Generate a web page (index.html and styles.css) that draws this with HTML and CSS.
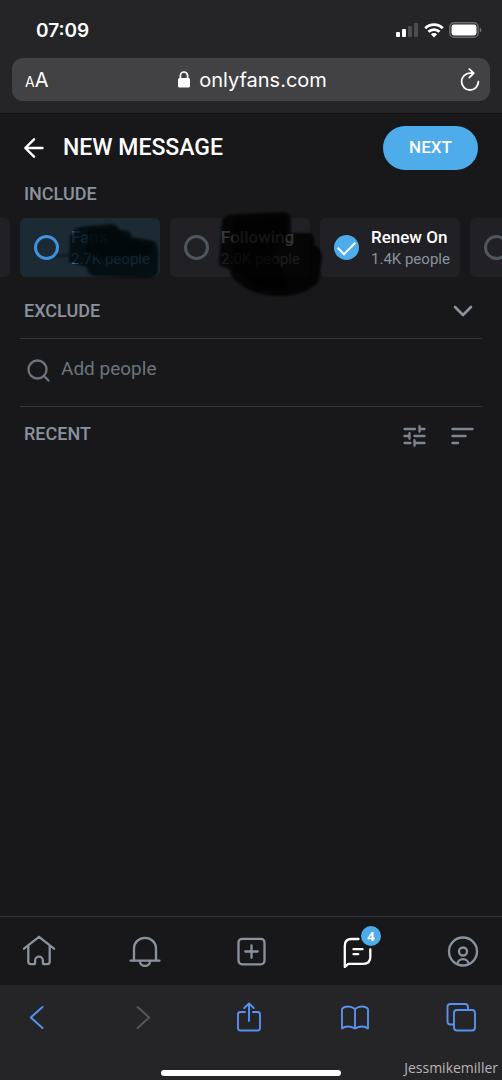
FILE: index.html
```html
<!DOCTYPE html>
<html lang="en">
<head>
<meta charset="utf-8">
<meta name="viewport" content="width=device-width, initial-scale=1">
<title>New message</title>
<link rel="stylesheet" href="styles.css">
</head>
<body>
<header class="browser-top">
  <div class="status">
    <time class="clock">07:09</time>
    <div class="status-icons">
      <svg width="23" height="15" viewBox="0 0 23 15" fill="#fff"><rect x="0" y="9" width="4" height="5" rx="1"/><rect x="6" y="6" width="4" height="8" rx="1"/><g fill="#4c4c4e"><rect x="12" y="3" width="4" height="11" rx="1"/><rect x="18" y="0" width="4" height="14" rx="1"/></g></svg>
      <svg width="20" height="15" viewBox="0 0 20 15" fill="none" stroke="#fff" stroke-width="2.800"><path d="M1.200 5.300a12.600 12.600 0 0 1 17.600 0M4.500 8.800a7.800 7.800 0 0 1 11 0"/><path d="M6.900 11.200a4.400 4.400 0 0 1 6.200 0L10 14.400z" fill="#fff" stroke="none"/></svg>
      <svg width="33" height="16" viewBox="0 0 33 16"><rect x=".8" y=".8" width="28.400" height="14.400" rx="4.200" fill="none" stroke="#6a6a6c" stroke-width="1.400"/><rect x="2.500" y="2.500" width="25" height="11" rx="2.400" fill="#fff"/><path d="M30.800 5.500c2 .8 2 4.200 0 5z" fill="#78787a"/></svg>
    </div>
  </div>
  <div class="address">
    <button class="text-size" aria-label="Text size"><small>A</small>A</button>
    <button class="site">
      <svg width="12" height="17" viewBox="0 0 12 17"><rect x="0" y="7" width="12" height="9.500" rx="1.600" fill="#fff"/><path d="M2.400 8V4.600a3.600 3.600 0 0 1 7.200 0V8" fill="none" stroke="#fff" stroke-width="1.700"/></svg>
      <span>onlyfans.com</span>
    </button>
    <button class="reload" aria-label="Reload"><svg width="20" height="24" viewBox="0 0 20 24" fill="none" stroke="#fff" stroke-width="1.800" stroke-linecap="round" stroke-linejoin="round"><path d="M13.500 5.200H10a8.400 8.400 0 1 0 8.400 8.400M9.400 1.200l4.300 4-4.300 4.300"/></svg></button>
  </div>
</header>

<main class="page">
  <div class="title-row">
    <a class="back" href="#" aria-label="Back"><svg width="20" height="20" viewBox="0 0 20 20" fill="none" stroke="#fff" stroke-width="2.400" stroke-linecap="round" stroke-linejoin="round"><path d="M18.500 10H1.500M10 1.300L1.300 10l8.700 8.700"/></svg></a>
    <h1>NEW MESSAGE</h1>
    <button class="next">NEXT</button>
  </div>

  <h2 class="label include">INCLUDE</h2>
  <div class="strip">
    <div class="chips">
      <div class="chip spare"></div>
      <label class="chip active"><input type="checkbox"><span class="chip-text"><b>Fans</b><span>2.7K people</span></span></label>
      <label class="chip"><input type="checkbox"><span class="chip-text"><b>Following</b><span>2.0K people</span></span></label>
      <label class="chip"><input type="checkbox" checked><span class="chip-text"><b>Renew On</b><span>1.4K people</span></span></label>
      <label class="chip"><input type="checkbox" aria-label="More people"></label>
    </div>
    <svg class="marker" width="340" height="100" viewBox="0 0 340 100" fill="#000">
      <g opacity=".8">
        <path d="M70 31Q72 21 88 20L112 18Q119 20 120 24Q131 23 132 31L154 35Q158 37 158 49V66Q156 73 144 72L94 70Q87 69 87 61L69 56Z" fill="#01080b"/>
        <path d="M56 50L72 49" stroke="#020a0e" stroke-width="1.500"/>
        <path d="M222 15Q224 8 240 8L284 6Q291 7 291 15V27H310Q315 29 314 39Q322 42 322 52L319 75Q310 87 285 90Q256 91 240 78Q229 71 230 64L219 59Z"/>
      </g>
      <path d="M88 24L114 22L130 34L152 38V48L98 52L86 46Z" fill="#01080b" opacity=".75"/>
      <path d="M232 13L286 11L287 32L274 50L284 66L290 84L262 84L234 66Z" opacity=".6"/>
    </svg>
  </div>

  <button class="exclude label">EXCLUDE
    <svg width="20" height="12" viewBox="0 0 20 12" fill="none" stroke="#8a929f" stroke-width="2.600" stroke-linecap="round" stroke-linejoin="round"><path d="M2 2l8 8 8-8"/></svg>
  </button>
  <label class="search">
    <svg width="23" height="23" viewBox="0 0 23 23" fill="none" stroke="#6d747e" stroke-width="2.300" stroke-linecap="round"><circle cx="10.500" cy="10.500" r="9"/><path d="M16.800 16.800l4.700 4.700"/></svg>
    <input type="text" placeholder="Add people" aria-label="Add people">
  </label>
  <div class="recent">
    <h2 class="label">RECENT</h2>
    <button aria-label="Filter"><svg width="23" height="22" viewBox="0 0 23 22" fill="none" stroke="#7e8591" stroke-width="2.300" stroke-linecap="round"><path d="M1.500 4h10.500M16.500 1.200v5.600M16.500 4h5M1.500 11h5M6.500 8.200v5.600M11.500 11h10M1.500 18h6M11.500 15.200v5.600M11.500 18h10"/></svg></button>
    <button aria-label="Sort"><svg width="23" height="22" viewBox="0 0 23 22" fill="none" stroke="#7e8591" stroke-width="2.500" stroke-linecap="round"><path d="M1.500 4h20M1.500 11h13M1.500 18h5.500"/></svg></button>
  </div>
</main>

<nav class="app-nav" aria-label="Main">
  <a href="#" aria-label="Home"><svg viewBox="0 0 34 34"><path d="M2 14.700L17 2.800l15 11.900M6.300 12V27.500q0 2.700 2.700 2.700h2.600q1.500 0 1.500-1.500v-2.200a3.900 3.900 0 0 1 7.800 0v2.200q0 1.500 1.500 1.500H25q2.700 0 2.700-2.700V12"/></svg></a>
  <a href="#" aria-label="Notifications"><svg viewBox="0 0 34 34"><path d="M2.500 26.700h29M6 26.700V14.500a11 10.700 0 0 1 22 0v12.200M12 27.500a5 4.300 0 0 0 10 0"/></svg></a>
  <a href="#" aria-label="New post"><svg viewBox="0 0 34 34"><rect x="4.500" y="4.800" width="26" height="25.500" rx="3.600"/><path d="M17.500 11.300v12.500M11.300 17.500h12.400"/></svg></a>
  <a href="#" class="current" aria-label="Messages"><svg viewBox="0 0 34 34" stroke-width="2.600"><path d="M18.500 5H11.500Q4.800 5 4.800 11.700V33l3.500-3.200H23.500q6.800 0 6.800-6.800v-7.500M13.500 15.200h9M13.500 20.200h4.700"/></svg><span class="badge">4</span></a>
  <a href="#" aria-label="Profile"><svg viewBox="0 0 34 34"><circle cx="17" cy="17.500" r="14"/><circle cx="17" cy="17.500" r="4"/><path d="M11.500 30a5.500 4.800 0 0 1 11 0"/></svg></a>
</nav>

<footer class="browser-bottom">
  <div class="tools">
    <button aria-label="Back"><svg viewBox="0 0 30 32"><path d="M20.500 6L8.800 16.500l11.700 10.500"/></svg></button>
    <button aria-label="Forward" disabled><svg viewBox="0 0 30 32"><path d="M9.500 6l11.700 10.500L9.500 27"/></svg></button>
    <button aria-label="Share"><svg viewBox="0 0 30 32"><path d="M11 11H6.500Q4 11 4 13.500V27q0 2.500 2.500 2.500h17Q26 29.500 26 27V13.500Q26 11 23.500 11H19M15 20V2.500M10.300 7L15 2.300 19.700 7"/></svg></button>
    <button aria-label="Bookmarks"><svg viewBox="0 0 30 32"><path d="M15 8Q12 5.500 8 5.500T2 8V27.500Q4.500 25.500 8 25.500T15 27.500Q18.500 25.500 22 25.500T28 27.500V8Q26 5.500 22 5.500T15 8V27.500"/></svg></button>
    <button aria-label="Tabs"><svg viewBox="0 0 30 32"><path d="M8 23.500H4.500Q1.500 23.500 1.500 20.500V6Q1.500 3 4.500 3H19Q22 3 22 6V9"/><rect x="8" y="9" width="21" height="20.500" rx="3"/></svg></button>
  </div>
  <div class="home-indicator"></div>
  <span class="credit">Jessmikemiller</span>
</footer>
</body>
</html>
```
FILE: styles.css
```css
* { box-sizing: border-box; }
body {
  margin: 0;
  min-height: 100vh;
  display: flex;
  flex-direction: column;
  background: #18181a;
  color: #fff;
  font-family: Roboto, sans-serif;
}
svg { display: block; flex: none; }
button {
  padding: 0;
  border: 0;
  background: none;
  color: inherit;
  font: inherit;
}
a { color: inherit; text-decoration: none; }

.browser-top {
  padding: 0 12px 12px;
  background: #252527;
  border-bottom: 1px solid #101012;
  font-family: Inter, sans-serif;
}
.status {
  height: 58px;
  padding: 2px 8px 0 24px;
  display: flex;
  align-items: center;
  justify-content: space-between;
}
.clock { font-size: 19px; font-weight: 600; }
.status-icons { display: flex; align-items: center; gap: 5px; }
.address {
  height: 43px;
  padding: 0 10px 0 13px;
  display: grid;
  grid-template-columns: 1fr auto 1fr;
  align-items: center;
  border-radius: 11px;
  background: #424244;
}
.text-size { justify-self: start; font-size: 20px; }
.text-size small { font-size: 14px; }
.site { display: flex; align-items: center; gap: 9px; font-size: 20px; }
.reload { justify-self: end; }

.page { flex: 1; }
.title-row {
  padding: 12px 24px 0;
  display: flex;
  align-items: center;
}
h1 {
  flex: 1;
  margin: 0 0 0 19px;
  font-size: 23px;
  line-height: 40px;
  font-weight: 500;
}
.next {
  width: 95px;
  height: 44px;
  padding-bottom: 2px;
  border-radius: 22px;
  background: #4eaceb;
  font-size: 17px;
  font-weight: 500;
}
.label {
  margin: 0;
  color: #8a929f;
  font-size: 18px;
  line-height: 24px;
  font-weight: 500;
}
.include { padding: 12px 24px 0; }

.strip { position: relative; overflow: hidden; padding: 12px 0 20px; }
.chips { display: flex; gap: 10px; margin-left: -130px; }
.chip {
  flex: none;
  width: 140px;
  height: 59px;
  padding-left: 14px;
  display: flex;
  align-items: center;
  gap: 12px;
  border-radius: 6px;
  background: #212125;
}
.chip.active { background: #1c2a34; }
.chip input {
  appearance: none;
  flex: none;
  width: 25px;
  height: 25px;
  margin: 0;
  border: 3px solid #4f565d;
  border-radius: 50%;
}
.chip.active input { border-color: #438fe0; }
.chip input:checked {
  display: grid;
  place-items: center;
  border: 0;
  background: #4eaceb;
}
.chip input:checked::before {
  content: "";
  width: 15px;
  height: 8px;
  margin-bottom: 4px;
  border: solid #fff;
  border-width: 0 0 2px 2px;
  transform: rotate(-45deg);
}
.chip-text { display: flex; flex-direction: column; white-space: nowrap; }
.chip b { font-size: 17px; line-height: 22px; font-weight: 500; }
.chip-text span { color: #8a929f; font-size: 15px; line-height: 22px; }
.chip.active .chip-text, .chip.active .chip-text span { color: #4f9bc8; }
.marker { position: absolute; left: 0; top: 0; filter: blur(1px); pointer-events: none; }

.exclude {
  width: calc(100% - 40px);
  margin: 0 20px;
  padding: 2px 9px 15px 4px;
  display: flex;
  align-items: center;
  justify-content: space-between;
  border-bottom: 1px solid #36373b;
}
.search {
  height: 68px;
  margin: 0 20px;
  padding: 0 7px 4px;
  display: flex;
  align-items: center;
  gap: 11px;
  border-bottom: 1px solid #36373b;
}
.search input {
  flex: 1;
  min-width: 0;
  padding: 0 0 3px;
  border: 0;
  outline: 0;
  background: none;
  color: #fff;
  font: 19px/26px Roboto, sans-serif;
}
.search input::placeholder { color: #6d747e; opacity: 1; }
.recent {
  padding: 15px 28px 15px 24px;
  display: flex;
  align-items: flex-end;
  gap: 25px;
}
.recent .label { flex: 1; }
.recent svg { margin-bottom: -1px; }

.app-nav {
  height: 69px;
  padding: 0 22px;
  display: flex;
  align-items: center;
  justify-content: space-between;
  border-top: 1px solid #35373d;
}
.app-nav a { position: relative; color: #8a929f; }
.app-nav .current { color: #fff; }
.app-nav svg {
  width: 34px;
  height: 34px;
  fill: none;
  stroke: currentColor;
  stroke-width: 2.3;
  stroke-linecap: round;
  stroke-linejoin: round;
}
.badge {
  position: absolute;
  top: -8px;
  right: -7px;
  width: 20px;
  height: 20px;
  border-radius: 50%;
  background: #4eaceb;
  font: 700 13px/20px "Noto Sans", sans-serif;
  text-align: center;
}

.browser-bottom {
  position: relative;
  height: 95px;
  padding: 16px 26px 4px 22px;
  display: flex;
  flex-direction: column;
  justify-content: space-between;
  background: #252527;
}
.tools { display: flex; justify-content: space-between; color: #5792f2; }
.tools button:disabled { color: #58585a; }
.tools svg {
  width: 30px;
  height: 32px;
  fill: none;
  stroke: currentColor;
  stroke-width: 1.9;
  stroke-linecap: round;
  stroke-linejoin: round;
}
.home-indicator {
  align-self: center;
  width: 180px;
  height: 6px;
  margin-left: 4px;
  border-radius: 3px;
  background: #fff;
}
.credit {
  position: absolute;
  right: 4px;
  bottom: 2px;
  color: #b5b5b6;
  font: 14px/20px "Open Sans", sans-serif;
}
```
